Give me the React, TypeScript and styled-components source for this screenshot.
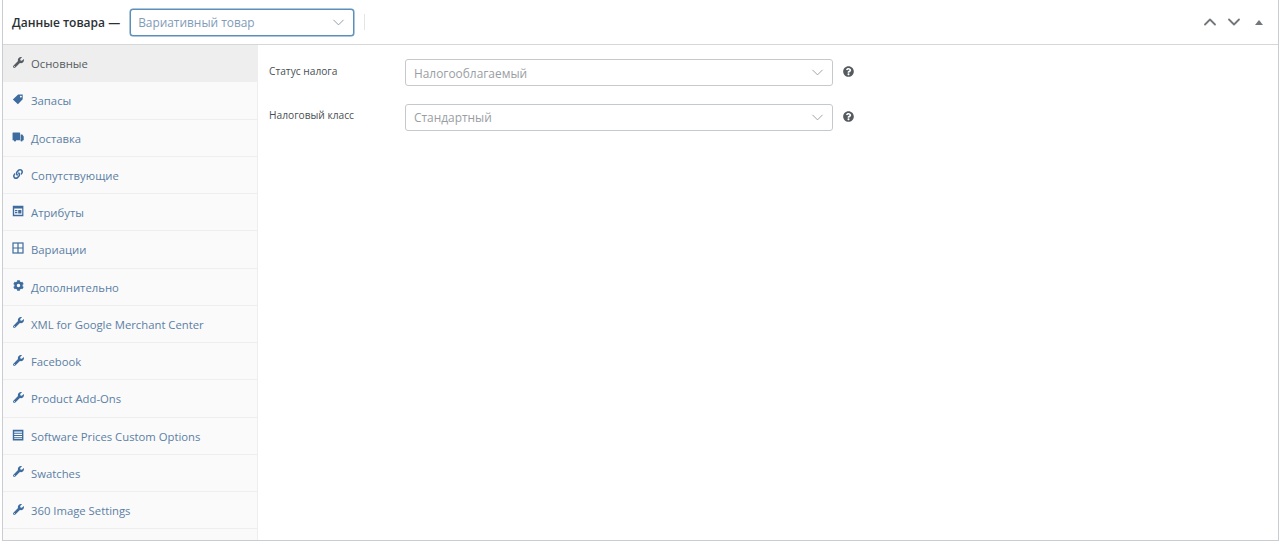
import { ReactNode } from "react";
import styled, { createGlobalStyle } from "styled-components";
import { FaWrench, FaLink, FaCog, FaQuestionCircle } from "react-icons/fa";
import { ChevronDown, ChevronUp } from "lucide-react";

const GlobalStyle = createGlobalStyle`
    html, body {
        margin: 0;
        padding: 0;
        height: 100%;
        background: #fff;
        overflow: hidden;
    }
    body {
        font-family: "Open Sans", "Noto Sans", sans-serif;
        color: #3c434a;
    }
`;

const Panel = styled.div`
    box-sizing: border-box;
    width: 1277px;
    height: 541px;
    margin-left: 2px;
    border: 1px solid #c9cdd1;
    border-top: none;
    display: flex;
    flex-direction: column;
    overflow: hidden;
`;

const Header = styled.header`
    box-sizing: border-box;
    flex: 0 0 45px;
    display: flex;
    align-items: center;
    padding: 0 0 0 9px;
    border-bottom: 1px solid #d5d7d9;
    background: #fff;
`;

const Title = styled.h2`
    margin: 0 10px 0 0;
    font-size: 12px;
    font-weight: 600;
    color: #2b3035;
    white-space: nowrap;
`;

const Select = styled.div<{ $width: number; $focused?: boolean }>`
    box-sizing: border-box;
    width: ${(p) => p.$width}px;
    height: 27px;
    display: flex;
    align-items: center;
    justify-content: space-between;
    padding: 0 5px 0 ${(p) => (p.$focused ? 7 : 8)}px;
    background: #fff;
    border-radius: 3px;
    border: 1px solid ${(p) => (p.$focused ? "#5b8fb9" : "#c6c9cc")};
    box-shadow: ${(p) => (p.$focused ? "0 0 0 0.5px #5b8fb9" : "none")};
    font-size: 11.9px;
    color: ${(p) => (p.$focused ? "#7f9cb8" : "#9a9ea3")};
    svg {
        color: ${(p) => (p.$focused ? "#8d98a3" : "#9a9ea3")};
    }
`;

const Divider = styled.span`
    width: 1px;
    height: 16px;
    margin-left: 10px;
    background: #e4e5e6;
`;

const HeaderActions = styled.div`
    margin-left: auto;
    display: flex;
    align-items: center;
    gap: 4px;
    padding-right: 15px;
    color: #72777c;
`;

const Triangle = styled.span`
    width: 0;
    height: 0;
    margin-left: 7px;
    border-left: 4px solid transparent;
    border-right: 4px solid transparent;
    border-bottom: 5px solid #72777c;
`;

const Body = styled.div`
    flex: 1;
    display: flex;
    min-height: 0;
`;

const Sidebar = styled.nav`
    flex: 0 0 254px;
    background: #fafafa;
    border-right: 1px solid #eeeeee;
    overflow: hidden;
`;

const Tab = styled.div<{ $active?: boolean }>`
    box-sizing: border-box;
    height: 37.25px;
    display: flex;
    align-items: center;
    gap: 7px;
    padding-left: 9px;
    padding-top: 1px;
    border-bottom: 1px solid #eeeeee;
    background: ${(p) => (p.$active ? "#eeeeee" : "transparent")};
    color: ${(p) => (p.$active ? "#555b61" : "#5b7fa5")};
    font-size: 11.3px;
    white-space: nowrap;
`;

const TabIcon = styled.span<{ $active?: boolean }>`
    flex: 0 0 12px;
    width: 12px;
    height: 12px;
    display: flex;
    align-items: center;
    justify-content: center;
    margin-top: -3px;
    color: ${(p) => (p.$active ? "#555b61" : "#3e6c9f")};
    svg {
        display: block;
    }
`;

const Content = styled.section`
    flex: 1;
    padding: 14px 0 0 11px;
    background: #fff;
`;

const Field = styled.div`
    display: flex;
    align-items: center;
    height: 27px;
    margin-bottom: 17.5px;
`;

const FieldLabel = styled.label`
    flex: 0 0 136px;
    margin-top: -4px;
    font-size: 10.2px;
    color: #4a4f54;
`;

const HelpIcon = styled.span`
    display: flex;
    margin-left: 10px;
    margin-top: -2px;
    color: #555a5f;
`;

const ArrowDown = () => <ChevronDown size={19} strokeWidth={1.2} />;

const TagIcon = () => (
    <svg width="13" height="13" viewBox="0 0 13 13" fill="currentColor">
        <path fillRule="evenodd" d="M6.6 1.2h5v5L6.4 11.6.9 6.4zM9.6 2.4a1 1 0 1 0 .01 0z" />
    </svg>
);

const TruckIcon = () => (
    <svg width="13" height="12" viewBox="0 0 13 12" fill="currentColor">
        <path d="M.6 1.6Q.6 1 1.2 1h7q.6 0 .6.6v8H.6zM9.4 3.4h1.8l1.5 2v4.2H9.4z" />
        <circle cx="3.2" cy="9.8" r="1.2" />
        <circle cx="10.4" cy="9.8" r="1.2" />
    </svg>
);

const AttributesIcon = () => (
    <svg width="12" height="12" viewBox="0 0 12 12" fill="currentColor">
        <path fillRule="evenodd" d="M.8.8h10.6v10.4H.8zM2.2 3.6v6.2h8V3.6zM3 5h2.4v1.2H3zM6.2 5h3.2v3.6H6.2zM3 7h2.4v1.2H3z" />
    </svg>
);

const GridIcon = () => (
    <svg width="12" height="12" viewBox="0 0 12 12" fill="none" stroke="currentColor" strokeWidth="1.2">
        <rect x="1" y="1" width="10" height="10" />
        <path d="M6 1v10M1 6h10" />
    </svg>
);

const ListIcon = () => (
    <svg width="12" height="12" viewBox="0 0 12 12" fill="currentColor">
        <path fillRule="evenodd" d="M.8.8h10.6v10.6H.8zM2.2 2.4v1.3h7.8V2.4zM2.2 4.8v1.2h7.8V4.8zM2.2 7v1.2h7.8V7zM2.2 9.2v.9h7.8v-.9z" />
    </svg>
);

const wrench = <FaWrench size={11} />;

const tabs: { label: string; icon: ReactNode; active?: boolean }[] = [
    { label: "Основные", icon: wrench, active: true },
    { label: "Запасы", icon: <TagIcon /> },
    { label: "Доставка", icon: <TruckIcon /> },
    { label: "Сопутствующие", icon: <FaLink size={10} /> },
    { label: "Атрибуты", icon: <AttributesIcon /> },
    { label: "Вариации", icon: <GridIcon /> },
    { label: "Дополнительно", icon: <FaCog size={11} /> },
    { label: "XML for Google Merchant Center", icon: wrench },
    { label: "Facebook", icon: wrench },
    { label: "Product Add-Ons", icon: wrench },
    { label: "Software Prices Custom Options", icon: <ListIcon /> },
    { label: "Swatches", icon: wrench },
    { label: "360 Image Settings", icon: wrench },
];

const fields = [
    { label: "Статус налога", value: "Налогооблагаемый" },
    { label: "Налоговый класс", value: "Стандартный" },
];

const App = () => (
    <>
        <GlobalStyle />
        <Panel>
            <Header>
                <Title>Данные товара —</Title>
                <Select $width={224} $focused>
                    Вариативный товар
                    <ArrowDown />
                </Select>
                <Divider />
                <HeaderActions>
                    <ChevronUp size={20} strokeWidth={2.2} />
                    <ChevronDown size={20} strokeWidth={2.2} />
                    <Triangle />
                </HeaderActions>
            </Header>
            <Body>
                <Sidebar>
                    {tabs.map((tab) => (
                        <Tab key={tab.label} $active={tab.active}>
                            <TabIcon $active={tab.active}>{tab.icon}</TabIcon>
                            {tab.label}
                        </Tab>
                    ))}
                </Sidebar>
                <Content>
                    {fields.map((field) => (
                        <Field key={field.label}>
                            <FieldLabel>{field.label}</FieldLabel>
                            <Select $width={428}>
                                {field.value}
                                <ArrowDown />
                            </Select>
                            <HelpIcon>
                                <FaQuestionCircle size={11} />
                            </HelpIcon>
                        </Field>
                    ))}
                </Content>
            </Body>
        </Panel>
    </>
);

export default App;
